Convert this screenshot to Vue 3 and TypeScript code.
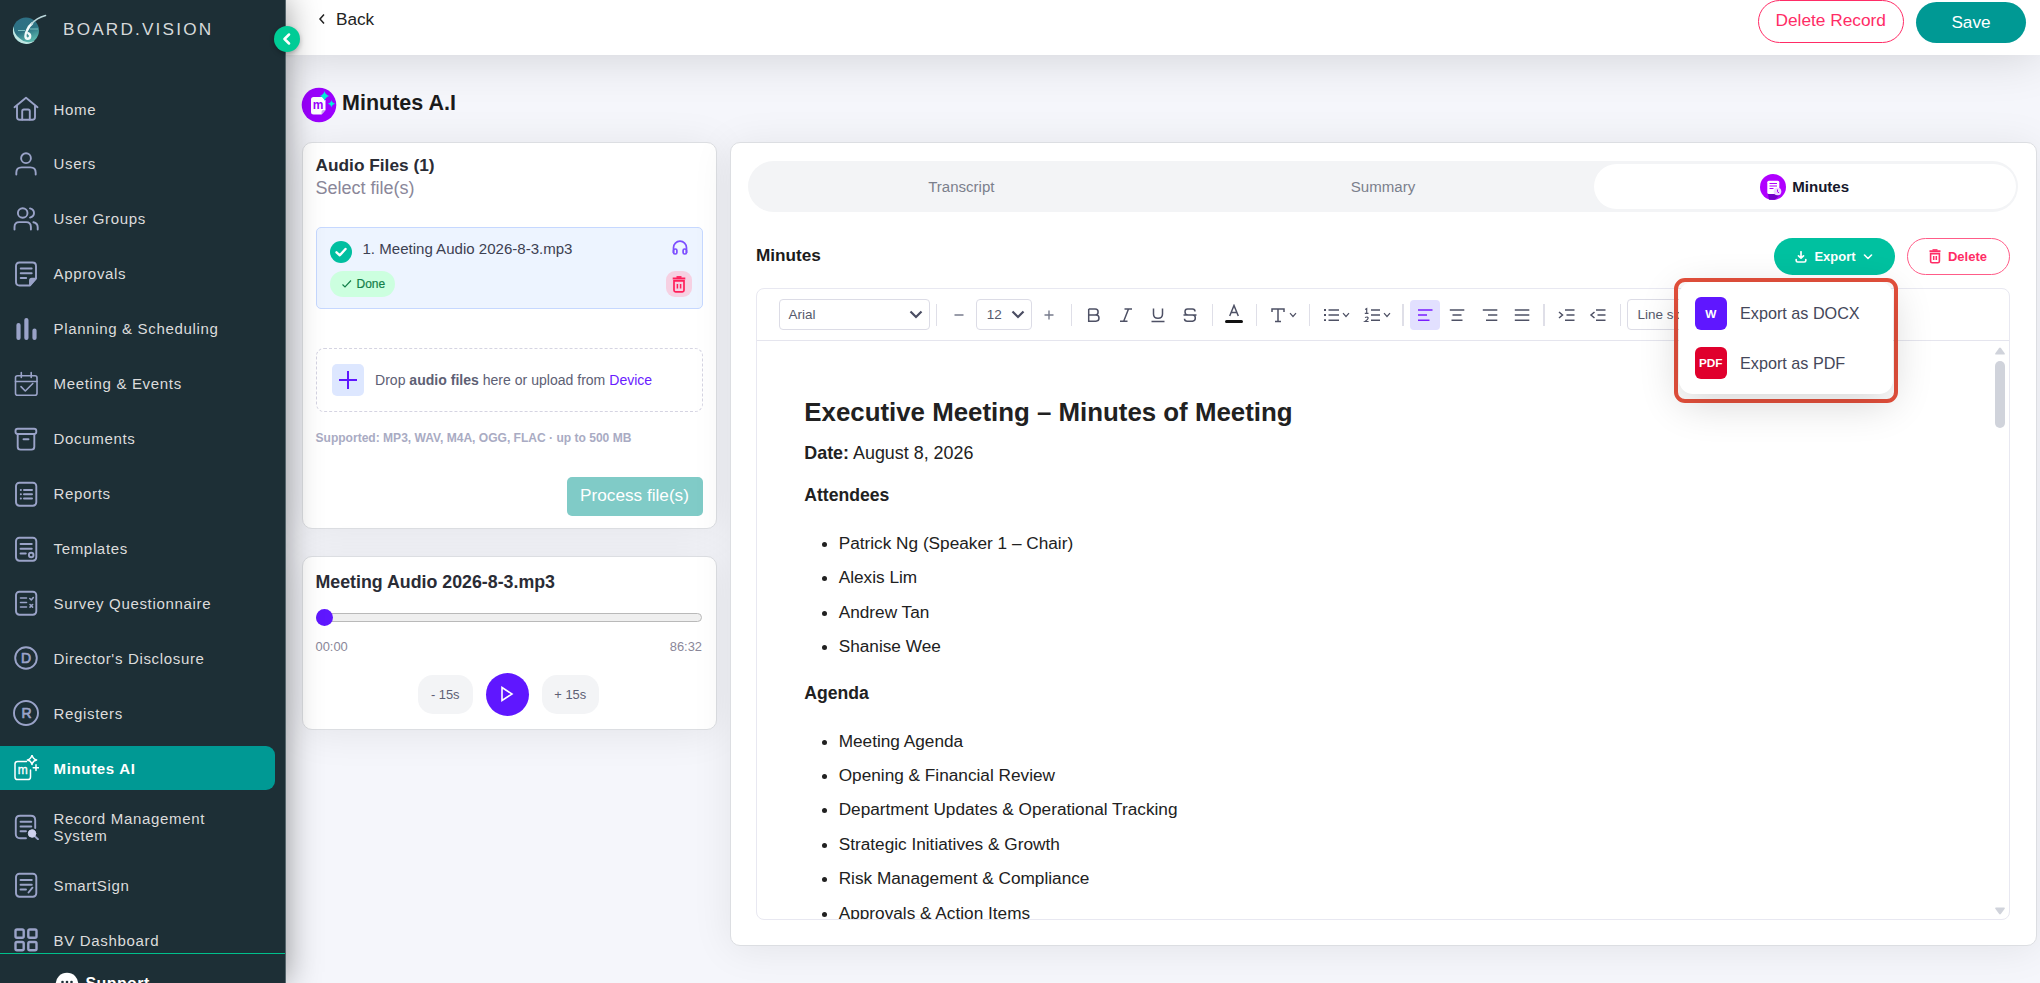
<script setup lang="ts">
import { ref } from 'vue'

interface NavItem {
  label: string
  icon: string
  active?: boolean
  tall?: boolean
}

const navItems: NavItem[] = [
  { label: 'Home', icon: 'home' },
  { label: 'Users', icon: 'user' },
  { label: 'User Groups', icon: 'group' },
  { label: 'Approvals', icon: 'approval' },
  { label: 'Planning & Scheduling', icon: 'bars' },
  { label: 'Meeting & Events', icon: 'calendar' },
  { label: 'Documents', icon: 'archive' },
  { label: 'Reports', icon: 'report' },
  { label: 'Templates', icon: 'template' },
  { label: 'Survey Questionnaire', icon: 'survey' },
  { label: "Director's Disclosure", icon: 'letterD' },
  { label: 'Registers', icon: 'letterR' },
  { label: 'Minutes AI', icon: 'minutes', active: true },
  { label: 'Record Management System', icon: 'record', tall: true },
  { label: 'SmartSign', icon: 'sign' },
  { label: 'BV Dashboard', icon: 'grid' },
]

const attendees = ['Patrick Ng (Speaker 1 – Chair)', 'Alexis Lim', 'Andrew Tan', 'Shanise Wee']
const agenda = [
  'Meeting Agenda',
  'Opening & Financial Review',
  'Department Updates & Operational Tracking',
  'Strategic Initiatives & Growth',
  'Risk Management & Compliance',
  'Approvals & Action Items',
]
const exportOpen = ref(true)
</script>

<template>
  <div class="app">
    <aside class="sidebar">
      <div class="brand">
        <svg class="logo" viewBox="0 0 36 32" width="36" height="32">
          <defs>
            <linearGradient id="globe" x1="0" y1="0" x2="0.4" y2="1">
              <stop offset="0" stop-color="#2f6f86" />
              <stop offset="0.6" stop-color="#2c7383" />
              <stop offset="1" stop-color="#58b5ac" />
            </linearGradient>
          </defs>
          <circle cx="15" cy="17.5" r="13" fill="url(#globe)" />
          <path d="M2.8 13a13 13 0 0 0 4.2 15a13 13 0 0 0 17 -.5a13 13 0 0 1-15.5-2.2a14 14 0 0 1-5.7-12.3z" fill="#bfe6e2" />
          <path d="M7 17.5h7M19 16h8" stroke="#79bfc0" stroke-width="1" />
          <path d="M21 10.500C18.500 12.500 17 15 16 17.500c-2.200 4.300-2.200 8 .500 8.200 3.200.200 3.500-4.300.900-5.400" fill="none" stroke="#f2fbfb" stroke-width="2.400" stroke-linecap="round" />
          <path d="M34.500 2.500C28 4.300 23.500 7.300 20.500 11" fill="none" stroke="#b9d6da" stroke-width="1.600" stroke-linecap="round" />
        </svg>
        <span class="brand-name">BOARD.VISION</span>
      </div>

      <nav class="nav">
        <a v-for="item in navItems" :key="item.label" class="nav-item" :class="{ active: item.active, tall: item.tall }">
          <svg class="nav-icon" viewBox="0 0 26 26" width="26" height="26" fill="none" stroke="currentColor" stroke-width="1.9" stroke-linecap="round" stroke-linejoin="round">
            <template v-if="item.icon === 'home'">
              <path d="M1.5 11.2 13 1.800l11.500 9.400M4 10v11q0 2.800 2.800 2.800h12.400q2.800 0 2.800-2.800V10" />
              <path d="M9.200 23.500v-8.300q0-1.700 1.700-1.700h4.200q1.700 0 1.700 1.700v8.300" />
            </template>
            <template v-else-if="item.icon === 'user'">
              <circle cx="13" cy="7.2" r="4.9" />
              <path d="M3.300 23.500v-1.700q0-5.400 5.400-5.400h8.600q5.400 0 5.400 5.400v1.700" />
            </template>
            <template v-else-if="item.icon === 'group'">
              <circle cx="9.7" cy="7" r="4.8" />
              <path d="M1.500 23.500v-2.600q0-4.800 4.800-4.800h6.800q4.800 0 4.800 4.800v2.600M17 2.400q4 1.100 4 4.600t-4 4.600M20.400 16.300q4.300 1 4.300 4.900v2.300" />
            </template>
            <template v-else-if="item.icon === 'approval'">
              <path d="M6.500 1.500h13q3.500 0 3.500 3.500v12.500L17 24.500H6.500Q3 24.500 3 21V5q0-3.500 3.500-3.500z" />
              <path d="M7.700 7.500h11M7.700 12.300h11M7.700 17h5.500" />
              <path d="M22.500 17.800h-3.700q-1.800 0-1.800 1.800v4.200z" fill="currentColor" />
            </template>
            <template v-else-if="item.icon === 'bars'">
              <path d="M5.500 9v13M13.400 4v18M21.500 14.500v7.500" stroke-width="4.2" />
            </template>
            <template v-else-if="item.icon === 'calendar'">
              <rect x="2.5" y="4.7" width="21.5" height="19.5" rx="2" stroke-width="1.6" />
              <path d="M2.500 10.500H24M8.300 1.500v5M18.200 1.500v5M8 15.600l4.300 4.400 7.500-7.500" stroke-width="1.6" />
            </template>
            <template v-else-if="item.icon === 'archive'">
              <rect x="2.5" y="2.8" width="20.8" height="5.2" rx="2.2" />
              <path d="M4.700 8.200v12.500q0 2.900 2.900 2.900h10.800q2.900 0 2.900-2.900V8.200M10.500 13.200h5" />
            </template>
            <template v-else-if="item.icon === 'letterD'">
              <circle cx="13" cy="13" r="10.8" />
              <text x="13" y="18" class="glyph">D</text>
            </template>
            <template v-else-if="item.icon === 'letterR'">
              <circle cx="13" cy="13" r="12" />
              <text x="13.5" y="18.2" class="glyph">R</text>
            </template>
            <template v-else-if="item.icon === 'minutes'">
              <path d="M13.500 6.500H4.600q-2.600 0-2.600 2.600v12.800q0 2.600 2.600 2.600h10.300q2.600 0 2.600-2.600V15" stroke-width="1.5" />
              <text x="9.8" y="19.3" class="glyph small">m</text>
              <path d="M19 .200q.900 4 4.600 4.700-3.700.700-4.600 4.700-.900-4-4.600-4.700 3.700-.700 4.600-4.700zM23 9.800v5.800M20.200 12.700h5.600" stroke-width="1.5" />
            </template>
            <template v-else-if="item.icon === 'record'">
              <path d="M13 24.300H7.200q-4.400 0-4.400-4.400V6.200q0-4.400 4.400-4.400h10.600q4.400 0 4.400 4.400V14" />
              <path d="M7.500 7.700h10.800M7.500 12.500h10.800M7.500 17.200h5.500M22 22.500l3 2.700" />
              <circle cx="19" cy="19.5" r="3.7" fill="#cfd3f0" stroke="#cfd3f0" stroke-width="1" />
            </template>
            <template v-else-if="item.icon === 'grid'">
              <rect x="2.5" y="2.5" width="8.2" height="8.2" rx="1.5" stroke-width="2.4" />
              <rect x="15.3" y="2.5" width="8.2" height="8.2" rx="1.5" stroke-width="2.4" />
              <rect x="2.5" y="15" width="8.2" height="8.2" rx="1.5" stroke-width="2.4" />
              <rect x="15.3" y="15" width="8.2" height="8.2" rx="1.5" stroke-width="2.4" />
            </template>
            <template v-else>
              <rect x="3" y="1.7" width="20.3" height="23" rx="3.4" />
              <path v-if="item.icon === 'report'" d="M7.800 9h.1M7.800 13.200h.1M7.800 17.500h.1M11 9h8M11 13.200h8M11 17.500h8" stroke-width="2" />
              <template v-else-if="item.icon === 'template'">
                <path d="M7.500 8h11.300M7.500 12.700h11.300M7.500 17.500h5.300" />
                <circle cx="18.2" cy="19" r="2.3" />
              </template>
              <path v-else-if="item.icon === 'survey'" d="M7.500 8h6M7.500 12.500h6M7.500 17h6M16.800 8.500l1.500 1.500 2-2.500M17 14.500l2.600 2.600M19.600 14.500l-2.600 2.600" stroke-width="1.6" />
              <path v-else d="M7.500 8h11.300M7.500 12.700h11.300M7.500 17.500h5.500M15.500 20.500l4-4.800" />
            </template>
          </svg>
          <span class="nav-label">{{ item.label }}</span>
        </a>
      </nav>

      <div class="support">
        <svg viewBox="0 0 24 24" width="24" height="24">
          <circle cx="12" cy="12" r="11.3" fill="#fff" />
          <circle cx="7.5" cy="10" r="1.3" fill="#1e3038" />
          <circle cx="12" cy="10" r="1.3" fill="#1e3038" />
          <circle cx="16.5" cy="10" r="1.3" fill="#1e3038" />
        </svg>
        <span>Support</span>
      </div>

      <button class="collapse" aria-label="Collapse sidebar">
        <svg viewBox="0 0 12 12" width="12" height="12"><path d="M8 1.500 3.500 6 8 10.500" fill="none" stroke="#fff" stroke-width="2.5" stroke-linecap="round" stroke-linejoin="round" /></svg>
      </button>
    </aside>

    <div class="page">
      <header class="topbar">
        <a class="back">
          <svg viewBox="0 0 8 12" width="8" height="12"><path d="M6 1.500 2 6l4 4.500" fill="none" stroke="#222" stroke-width="1.5" /></svg>
          <span>Back</span>
        </a>
        <div class="top-actions">
          <button class="btn-record">Delete Record</button>
          <button class="btn-save">Save</button>
        </div>
      </header>

      <main class="content">
        <h1 class="page-title">
          <svg viewBox="0 0 36 36" width="36" height="36">
            <circle cx="18" cy="18" r="17.3" fill="#9c00ff" />
            <path d="M12.500 10h9l3 3.500v9.500l-4 4.500h-8q-2.500 0-2.500-2.500V12.500q0-2.500 2.500-2.500z" fill="#fff" />
            <path d="M24.500 23l-4 4.500V25q0-2 2-2z" fill="#c9a9ee" />
            <text x="17" y="22.3" class="badge-m">m</text>
            <path d="M23.500 4q1 4.200 5.200 5-4.200.800-5.200 5-1-4.200-5.200-5 4.200-.800 5.200-5zM30.500 13q.700 3.200 3.800 3.800-3.100.600-3.800 3.800-.700-3.200-3.800-3.800 3.100-.600 3.800-3.800z" fill="#00f0d8" />
          </svg>
          <span>Minutes A.I</span>
        </h1>

        <div class="columns">
          <div class="left">
            <section class="card files">
              <h2 class="card-title">Audio Files (1)</h2>
              <p class="card-sub">Select file(s)</p>

              <div class="file">
                <div class="file-row">
                  <svg viewBox="0 0 22 22" width="22" height="22"><circle cx="11" cy="11" r="11" fill="#00bfa0" /><path d="M6.500 11.300 9.800 14.300 15.500 8" fill="none" stroke="#fff" stroke-width="2.4" stroke-linecap="round" stroke-linejoin="round" /></svg>
                  <span class="file-name">1. Meeting Audio 2026-8-3.mp3</span>
                  <svg class="phones" viewBox="0 0 16 16" width="16" height="16" fill="none" stroke="#7c4dff" stroke-width="1.7"><path d="M1.500 13V7.700a6.500 6.500 0 0 1 13 0V13" /><rect x="1.5" y="9" width="3.4" height="5" rx="1.5" /><rect x="11.1" y="9" width="3.4" height="5" rx="1.5" /></svg>
                </div>
                <div class="file-row second">
                  <span class="pill">
                    <svg viewBox="0 0 12 10" width="12" height="10"><path d="M1.500 5.500 4 8l6-6.500" fill="none" stroke="#14804a" stroke-width="1.2" /></svg>
                    Done
                  </span>
                  <span class="trash">
                    <svg viewBox="0 0 14 17" width="14" height="17" fill="none" stroke="#ff1f5a"><path d="M.700 2.500h12.600" stroke-width="2" /><path d="M4.500 1h5" stroke-width="1.8" /><path d="M2 4.800v9.400q0 1.600 1.600 1.600h6.800q1.600 0 1.600-1.600V4.800z" stroke-width="1.7" /><path d="M5.400 8v4.500M8.600 8v4.500" stroke-width="1.5" /></svg>
                  </span>
                </div>
              </div>

              <div class="drop">
                <span class="plus">
                  <svg viewBox="0 0 18 18" width="18" height="18"><path d="M9 0v18M0 9h18" stroke="#5f17ff" stroke-width="2" /></svg>
                </span>
                <span class="drop-text">Drop <b>audio files</b> here or upload from <em>Device</em></span>
              </div>
              <p class="supported">Supported: MP3, WAV, M4A, OGG, FLAC · up to 500 MB</p>
              <button class="process">Process file(s)</button>
            </section>

            <section class="card player">
              <h2 class="card-title wide">Meeting Audio 2026-8-3.mp3</h2>
              <div class="slider"><span class="track"></span><span class="thumb"></span></div>
              <div class="times"><span>00:00</span><span>86:32</span></div>
              <div class="controls">
                <button class="skip">- 15s</button>
                <button class="play" aria-label="Play">
                  <svg viewBox="0 0 14 16" width="14" height="16"><path d="M2 1.500 12 8 2 14.500z" fill="none" stroke="#fff" stroke-width="1.6" /></svg>
                </button>
                <button class="skip plus-skip">+ 15s</button>
              </div>
            </section>
          </div>

          <section class="card workspace">
            <div class="tabs">
              <span class="tab">Transcript</span>
              <span class="tab">Summary</span>
              <span class="tab on">
                <svg viewBox="0 0 26 26" width="26" height="26">
                  <circle cx="13" cy="13" r="13" fill="#b000ff" />
                  <path d="M8 20h8l4 1-5 4.700H9z" fill="#7300c8" />
                  <path d="M8.800 6.800h9q1.500 0 1.500 1.500V20H8.800q-1.500 0-1.500-1.500V8.300q0-1.500 1.500-1.500z" fill="#fff" />
                  <path d="M9.500 9.500h7.500M9.500 12h7.500M9.500 14.500h4" stroke="#b000ff" stroke-width="1.1" />
                  <circle cx="17.5" cy="17.5" r="3.8" fill="#f0d8ff" />
                  <path d="M17.500 15.500v2.300l1.500 1" stroke="#b000ff" stroke-width="1" fill="none" />
                </svg>
                Minutes
              </span>
            </div>

            <div class="panel-head">
              <h2>Minutes</h2>
              <div class="head-actions">
                <button class="btn-export">
                  <svg viewBox="0 0 12 12" width="12" height="12" fill="none" stroke="#fff" stroke-width="1.7" stroke-linecap="round" stroke-linejoin="round"><path d="M6 .800V7M3.500 4.800 6 7.200l2.500-2.400M1.200 8.500v1q0 1.500 1.500 1.500h6.600q1.500 0 1.500-1.500v-1" /></svg>
                  <span>Export</span>
                  <svg viewBox="0 0 10 8" width="10" height="8"><path d="M1.500 2 5 5.500 8.500 2" fill="none" stroke="#fff" stroke-width="1.6" stroke-linecap="round" stroke-linejoin="round" /></svg>
                </button>
                <button class="btn-delete">
                  <svg viewBox="0 0 12 15" width="12" height="15" fill="none" stroke="#ff2c66"><path d="M.500 2.200h11" stroke-width="1.9" /><path d="M3.500.900h5" stroke-width="1.5" /><path d="M1.600 4.600v7.700q0 1.500 1.500 1.500h5.800q1.500 0 1.500-1.500V4.600z" stroke-width="1.6" /><path d="M4.700 7v4M7.300 7v4" stroke-width="1.5" /></svg>
                  <span>Delete</span>
                </button>
                <div v-if="exportOpen" class="export-frame">
                  <div class="export-menu">
                    <div class="export-item"><span class="doc w">W</span>Export as DOCX</div>
                    <div class="export-item"><span class="doc pdf">PDF</span>Export as PDF</div>
                  </div>
                </div>
              </div>
            </div>

            <div class="editor">
              <div class="toolbar">
                <span class="select font">Arial<svg class="chev" viewBox="0 0 14 9" width="14" height="9"><path d="M1.500 1.500 7 7l5.500-5.500" /></svg></span>
                <i class="sep"></i>
                <span class="tool"><svg viewBox="0 0 18 18"><path d="M4.500 9h9" stroke="#777b8c" stroke-width="1.4" /></svg></span>
                <span class="select size">12<svg class="chev" viewBox="0 0 14 9" width="14" height="9"><path d="M1.500 1.500 7 7l5.500-5.500" /></svg></span>
                <span class="tool"><svg viewBox="0 0 18 18"><path d="M4.500 9h9M9 4.500v9" stroke="#777b8c" stroke-width="1.4" /></svg></span>
                <i class="sep"></i>
                <span class="tool"><svg viewBox="0 0 18 18"><path d="M3.700 3v12.200h7.300q3 0 3-3.100 0-3.100-3-3.100H4M3.700 3h6.500q2.900 0 2.900 3t-2.900 3" /></svg></span>
                <span class="tool"><svg viewBox="0 0 18 18"><path d="M7.500 3H15M3 15.200h7.500M11.500 3 6.700 15.200" /></svg></span>
                <span class="tool"><svg viewBox="0 0 18 18"><path d="M4.500 2.500v5.500q0 4.300 4.500 4.300t4.500-4.300V2.500M2.500 15.500h13" /></svg></span>
                <span class="tool"><svg viewBox="0 0 18 18"><path d="M14 5.500q0-2.500-2.500-2.500H6.500Q4 3 4 5.700 4 9 7 9M2.500 9h13M11.500 9q2.800 0 2.800 3t-2.800 3.200H6.200q-2.600 0-2.700-2.500" /></svg></span>
                <i class="sep"></i>
                <span class="tool colour"><svg viewBox="0 0 18 22" width="18" height="22"><path d="M4.700 12 9 1.500 13.300 12M6.200 8.600h5.600" /><path d="M1.500 17.500h15" stroke="#111" stroke-width="3" stroke-linecap="round" /></svg></span>
                <i class="sep"></i>
                <span class="tool pair type"><svg viewBox="0 0 18 18"><path d="M3 6V3h12v3M9 3v12.500M6 15.500h6" /></svg><svg class="mini" viewBox="0 0 8 6"><path d="M1 1.200 4 4.500l3-3.300" /></svg></span>
                <i class="sep"></i>
                <span class="tool pair bullet"><svg viewBox="0 0 18 18"><path d="M6.500 4H17M6.500 9H17M6.500 14.200H17" /><path d="M2 4h2M2 9h2M2 14.200h2" stroke-width="1.8" /></svg><svg class="mini" viewBox="0 0 8 6"><path d="M1 1.200 4 4.500l3-3.300" /></svg></span>
                <span class="tool pair number"><svg viewBox="0 0 18 18"><path d="M8 4h9M8 9h9M8 14.200h9" /><path d="M2.200 3.500 3.700 2.500v5M1.800 7.300h3.700M2 11.500q3-1.200 3.200.6Q5.200 13.500 2 15.500h3.600" stroke-width="1.2" /></svg><svg class="mini" viewBox="0 0 8 6"><path d="M1 1.200 4 4.500l3-3.300" /></svg></span>
                <i class="sep"></i>
                <span class="tool chosen"><svg viewBox="0 0 18 18"><path d="M2 4h14.500M2 9h9M2 14.200h11.500" /></svg></span>
                <span class="tool"><svg viewBox="0 0 18 18"><path d="M1.800 4h14.500M4.500 9h9M3.500 14.200h11" /></svg></span>
                <span class="tool"><svg viewBox="0 0 18 18"><path d="M1.800 4h14.500M7 9h9.300M5 14.200h11.300" /></svg></span>
                <span class="tool"><svg viewBox="0 0 18 18"><path d="M1.800 4h14.500M1.800 9h14.500M1.800 14.200h14.500" /></svg></span>
                <i class="sep"></i>
                <span class="tool"><svg viewBox="0 0 18 18"><path d="M8 4h9.500M9.500 9h8M8 14.200h9.500M2 6l3.500 3L2 12" /></svg></span>
                <span class="tool"><svg viewBox="0 0 18 18"><path d="M7 4h9.500M8.500 9h8M7 14.200h9.500M5.500 6 2 9l3.500 3" /></svg></span>
                <i class="sep"></i>
                <span class="select spacing">Line spacing<svg class="chev" viewBox="0 0 14 9" width="14" height="9"><path d="M1.500 1.500 7 7l5.500-5.500" /></svg></span>
              </div>
              <div class="doc-body">
                <article>
                  <h3>Executive Meeting – Minutes of Meeting</h3>
                  <p class="date"><b>Date:</b> August 8, 2026</p>
                  <h4>Attendees</h4>
                  <ul><li v-for="a in attendees" :key="a">{{ a }}</li></ul>
                  <h4>Agenda</h4>
                  <ul><li v-for="a in agenda" :key="a">{{ a }}</li></ul>
                </article>
                <div class="scroll">
                  <svg viewBox="0 0 10 8" width="10" height="8"><path d="M4 1.200q1-1.200 2 0l3.700 5q.600 1.300-.700 1.300H1Q-.300 7.500.300 6.200z" /></svg>
                  <span class="scroll-thumb"></span>
                  <svg class="down" viewBox="0 0 10 8" width="10" height="8"><path d="M4 6.800q1 1.200 2 0l3.700-5Q10.300.500 9 .500H1Q-.300.500.300 1.800z" /></svg>
                </div>
              </div>
            </div>
          </section>
        </div>
      </main>
    </div>
  </div>
</template>

<style>
html, body { margin: 0; overflow: hidden; }
</style>

<style scoped>
* { box-sizing: border-box; }
.app {
  display: flex; width: 100vw; height: 100vh; overflow: hidden;
  background: #f5f6fb; color: #222;
  font-family: "Liberation Sans", Arial, sans-serif; font-size: 17.2px;
}
h1, h2, h3, h4, p, ul { margin: 0; padding: 0; }
button { font-family: inherit; border: 0; padding: 0; background: none; }
svg { flex: none; display: block; }

.sidebar {
  position: relative; z-index: 5; flex: none; width: 286px; height: 100%;
  display: flex; flex-direction: column;
  background: #1d2f36; border-right: 1px solid #56666c;
  box-shadow: 0 0 32px rgba(0, 0, 0, .42);
}
.brand { display: flex; align-items: center; height: 58px; padding-left: 11px; flex: none; }
.brand-name { margin-left: 16px; color: #d6d9da; font-size: 17.2px; letter-spacing: 2.18px; }
.nav { flex: 1; min-height: 0; overflow: hidden; display: flex; flex-direction: column; gap: 10.95px; padding: 29px 10.5px 0 0; }
.nav-item { display: flex; align-items: center; flex: none; height: 44px; padding-left: 13.3px; color: #9aa3c8; }
.nav-item.tall { height: 51px; }
.nav-label { width: 175px; margin-left: 14.2px; color: #dcdcdc; font-size: 15.05px; line-height: 17px; letter-spacing: .65px; }
.nav-item.active { background: #009994; border-radius: 0 9px 9px 0; color: #fff; }
.nav-item.active .nav-label { color: #fff; font-weight: 700; }
.glyph { fill: currentColor; stroke: currentColor; stroke-width: .7; font-size: 14px; text-anchor: middle; }
.glyph.small { font-size: 12px; stroke-width: .3; }
.support {
  flex: none; height: 30px; border-top: 1px solid #00c08c; overflow: hidden;
  display: flex; align-items: flex-start; padding: 18px 0 0 54.5px;
  color: #fff; font-size: 16px; font-weight: 700; line-height: 23px; letter-spacing: .4px;
}
.support span { margin-left: 7px; }
.collapse {
  position: absolute; left: 273.5px; top: 26px; width: 26px; height: 26px; border-radius: 50%;
  background: #00cc96; display: flex; align-items: center; justify-content: center; box-shadow: 0 2px 5px rgba(0, 0, 0, .25);
}

.page { flex: 1; min-width: 0; display: flex; flex-direction: column; }
.topbar {
  position: relative; z-index: 2; flex: none; height: 55px; background: #fff;
  display: flex; justify-content: space-between; padding: 0 14px 0 32px;
  box-shadow: 0 0 50px rgba(0, 0, 0, .16);
}
.back { display: flex; align-items: center; height: 38px; gap: 10px; }
.top-actions { display: flex; gap: 12px; }
.btn-record { width: 146.5px; height: 43px; border: 1px solid #ff2c66; border-radius: 22px; color: #ff2c66; font-size: 17.3px; background: #fff; padding-bottom: 2px; }
.btn-save { width: 110px; height: 41px; margin-top: 2px; border-radius: 21px; background: #009994; color: #fff; font-size: 17.2px; padding-bottom: 1px; }

.content { flex: 1; padding: 0 3.5px 0 16px; min-height: 0; }
.page-title { display: flex; align-items: center; gap: 5px; height: 50px; margin: 25px 0 12px -1px; font-size: 21.5px; color: #1b1b1b; }
.page-title span { margin-top: -3px; }
.badge-m { fill: #9c00ff; font-size: 12px; font-weight: 700; text-anchor: middle; }
.columns { display: flex; gap: 13px; align-items: flex-start; }
.left { flex: none; width: 414.5px; display: flex; flex-direction: column; gap: 26.5px; }
.card { background: #fff; border: 1px solid #dcdee2; border-radius: 10px; box-shadow: 0 3px 40px rgba(0, 0, 0, .08); }
.files { height: 387px; padding: 11px 13px 0 12.5px; display: flex; flex-direction: column; }
.card-title { font-size: 17.3px; line-height: 23px; color: #2a2c35; }
.card-title.wide { font-size: 17.8px; }
.card-sub { color: #8a8799; line-height: 22px; font-size: 18px; }
.file { margin-top: 28px; height: 82px; border: 1px solid #c6d8ff; border-radius: 5px; background: #edf4ff; padding: 13px 10px 0 13px; }
.file-row { display: flex; align-items: center; height: 22px; }
.file-name { flex: 1; margin-left: 11px; margin-top: -7px; font-size: 15.05px; color: #3d4152; }
.phones { margin: -8px 4px 0 0; }
.second { justify-content: space-between; height: 26px; margin-top: 8px; }
.pill { display: flex; align-items: center; gap: 4px; height: 26px; width: 65.5px; padding-left: 11px; border-radius: 13px; background: #ccffdf; color: #14804a; font-size: 12px; }
.pill { -webkit-text-stroke: .2px #14804a; }
.trash { display: flex; align-items: center; justify-content: center; width: 26px; height: 26px; border-radius: 9px; background: #f6d0e2; }
.drop {
  margin-top: 39px; height: 64px; border: 1px dashed #d5d4e2; border-radius: 8px;
  display: flex; align-items: center; padding-left: 15px; color: #5d6074; font-size: 14.05px;
}
.plus { width: 32px; height: 32px; margin-right: 11.5px; border-radius: 5px; background: #dde7ff; display: flex; align-items: center; justify-content: center; }
.drop-text { margin-top: -1px; }
.drop em { color: #6a1cff; font-style: normal; }
.supported { margin-top: 18px; line-height: 16px; color: #a9abc3; font-size: 12.05px; font-weight: 700; }
.process { align-self: flex-end; margin-top: 31px; width: 136px; height: 38.5px; border-radius: 5px; background: #80cbc7; color: #fff; font-size: 17.2px; padding-bottom: 1px; }

.player { height: 174px; padding: 14px 13.5px 0 12.5px; }
.slider { position: relative; height: 17px; margin-top: 15.5px; display: flex; align-items: center; }
.track { flex: 1; height: 9px; border: 1px solid #b9b9b9; border-radius: 5px; background: #efefef; }
.thumb { position: absolute; left: 0; top: 0; width: 17px; height: 17px; border-radius: 50%; background: #5f17ff; }
.times { display: flex; justify-content: space-between; margin-top: 12px; line-height: 17px; font-size: 12.9px; color: #8a8799; }
.controls { display: flex; align-items: center; justify-content: center; gap: 13px; margin: 17.5px 1px 0 0; }
.skip { width: 55px; height: 39px; border-radius: 15px; background: #f3f4f6; color: #5d6074; font-size: 12.9px; }
.plus-skip { width: 57px; }
.play { width: 43px; height: 43px; border-radius: 50%; background: #5f17ff; display: flex; align-items: center; justify-content: center; }

.workspace { flex: 1; min-width: 0; height: 804px; padding: 17.8px 18px 0 17px; }
.tabs { display: flex; height: 51.5px; padding: 3px 2px 3px 3px; border-radius: 26px; background: #f3f4f6; }
.tab { flex: 1; display: flex; align-items: center; justify-content: center; padding-bottom: 1px; font-size: 15.05px; color: #7b7f8c; }
.tab.on { gap: 6px; border-radius: 23px; background: #fff; color: #16182c; font-weight: 700; }
.tab.on svg { margin-top: 1px; }
.panel-head { display: flex; justify-content: space-between; align-items: center; height: 37px; margin: 26.2px 8px 0 8.5px; }
.panel-head h2 { font-size: 17.2px; color: #1b1b1b; margin-top: -2px; }
.head-actions { position: relative; display: flex; gap: 12px; }
.btn-export, .btn-delete { height: 37px; border-radius: 19px; display: flex; align-items: center; justify-content: center; gap: 7px; font-size: 13px; font-weight: 700; }
.btn-export { width: 121px; background: #00c1a0; color: #fff; }
.btn-delete { width: 103px; border: 1px solid #ff5c88; color: #ff2c66; background: #fff; }
.export-frame { position: absolute; z-index: 3; right: 112px; top: 40px; width: 224px; height: 125px; border: 4px solid #e5503c; border-radius: 11px; }
.export-menu {
  margin-left: 1.5px; margin-right: .5px; height: 112px; border-radius: 14px; background: #fff; padding: 15px 0 0 15.5px;
  display: flex; flex-direction: column; gap: 17px;
  box-shadow: 0 10px 40px rgba(0, 0, 0, .16);
}
.export-item { display: flex; align-items: center; gap: 13px; height: 32.5px; font-size: 16.2px; color: #44475a; }
.doc { width: 32.5px; height: 32.5px; border-radius: 6px; color: #fff; font-weight: 700; font-size: 11.8px; display: flex; align-items: center; justify-content: center; }
.w { background: #5f17ff; }
.pdf { background: #e0002d; }

.editor { height: 632px; margin: 12.5px 8px 0 8.5px; border: 1.5px solid #e8e8f1; border-radius: 8px; overflow: hidden; display: flex; flex-direction: column; }
.toolbar { flex: none; display: flex; align-items: center; gap: 2.15px; height: 52.5px; padding-left: 21.5px; border-bottom: 1px solid #e5e5ee; }
.select { flex: none; height: 31px; display: flex; align-items: center; justify-content: space-between; padding: 0 6px 1px 9px; border: 1px solid #dcdce6; border-radius: 4px; font-size: 13.5px; color: #565a6c; }
.font { width: 151px; }
.size { width: 56.5px; padding-left: 10px; }
.spacing { width: 128px; }
.chev path { fill: none; stroke: #4a4d62; stroke-width: 2.2; }
.sep { flex: none; width: 1.4px; height: 22px; margin: 0 4.2px; background: #dfdfe8; }
.tool { flex: none; width: 30.1px; height: 30px; border-radius: 4px; display: flex; align-items: center; justify-content: center; color: #4e5165; }
.tool svg { width: 18px; height: 18px; fill: none; stroke: currentColor; stroke-width: 1.5; }
.tool.colour svg { height: 22px; }
.tool.pair { width: 38.8px; gap: 2px; padding: 0; }
.tool svg.mini { width: 8px; height: 6px; stroke-width: 1.2; }
.chosen { background: #e2e0ff; color: #7a1cff; }

.doc-body { flex: 1; min-height: 0; display: flex; justify-content: space-between; overflow: hidden; }
article { padding: 47.5px 0 0 47.3px; color: #212121; }
article h3 { font-size: 25.85px; line-height: 46px; height: 46px; }
article .date { font-size: 17.9px; line-height: 36.5px; height: 36px; margin-bottom: 7.5px; }
article h4 { font-size: 17.6px; line-height: 34.4px; height: 34.4px; }
article ul { padding: 13px 0 12.8px 34.4px; }
article li { line-height: 34.4px; height: 34.4px; font-size: 17.23px; }
.scroll { width: 14px; margin-right: 1.5px; padding: 6px 0 4px; display: flex; flex-direction: column; align-items: center; gap: 6px; }
.scroll path { fill: #d0d3db; }
.scroll-thumb { width: 10px; height: 67px; border-radius: 5px; background: #d0d3db; }
.down { margin-top: auto; }
</style>
